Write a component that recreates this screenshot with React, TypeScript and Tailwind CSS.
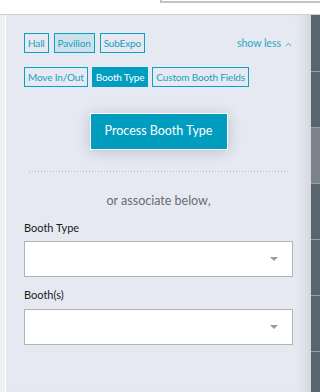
import { ChevronUp } from 'lucide-react';

export default function App() {
  const filters = ['Hall', 'Pavilion', 'SubExpo'];
  const tabs = ['Move In/Out', 'Booth Type', 'Custom Booth Fields'];
  const railRows = [0, 1, 2, 3, 4, 5, 6];

  return (
    <div className="w-[320px] h-[392px] bg-white flex flex-col overflow-hidden font-['Lato',sans-serif]">
      {/* strip above the panel */}
      <div className="h-[15px] flex justify-end border-b border-[#cfcfcf]">
        <div className="w-[160px] h-[3px] border-l-2 border-b-2 border-[#c4c4c4]" />
      </div>

      <div className="flex flex-1 min-h-0">
        <div className="w-[6px] bg-[#f1f1f1] border-r border-white" />

        <div className="flex-1 bg-[#e6e9f1] shadow-[inset_-14px_0_14px_-10px_rgba(0,0,0,0.10)] px-[18px] pt-[18px]">
          <div className="flex items-end justify-between">
            <div className="flex gap-[5px]">
              {filters.map((f) => (
                <span
                  key={f}
                  className={`h-[20px] px-[3px] flex items-center border border-[#0ba1c3] text-[10px] tracking-[-0.15px] text-[#1a9ec0] ${
                    f === 'Pavilion' ? 'bg-[#cde2ec]' : ''
                  }`}
                >
                  {f}
                </span>
              ))}
            </div>
            <button className="flex items-center gap-[3px] text-[10.5px] text-[#2aa3c6] mb-[1px]">
              show less
              <ChevronUp className="w-[9px] h-[9px]" strokeWidth={2.5} />
            </button>
          </div>

          <div className="flex gap-[4px] mt-[14px]">
            {tabs.map((t) => (
              <span
                key={t}
                className={`h-[20px] px-[3px] flex items-center border text-[10px] tracking-[-0.15px] ${
                  t === 'Booth Type'
                    ? 'bg-[#009ec1] border-[#009ec1] text-white'
                    : 'border-[#0ba1c3] text-[#1a9ec0]'
                }`}
              >
                {t}
              </span>
            ))}
          </div>

          <div className="flex justify-center mt-[26px]">
            <button className="w-[138px] h-[37px] bg-[#009dbf] border border-white text-white text-[12.5px] shadow-[0_2px_14px_rgba(40,50,80,0.22)]">
              Process Booth Type
            </button>
          </div>

          <div className="mx-[5px] mt-[21px] h-px bg-[linear-gradient(to_right,#b4b8c0_1px,transparent_1px)] bg-[length:3px_1px]" />

          <p className="mt-[20px] text-center text-[12.5px] text-[#686c73]">or associate below,</p>

          <label className="block mt-[9px] text-[11px] text-[#1b1b1b]">Booth Type</label>
          <div className="mt-[5px] h-[36px] bg-white border border-[#b3b3b7] flex items-center justify-end pr-[14px]">
            <span className="w-0 h-0 border-l-[4px] border-r-[4px] border-t-[4px] border-l-transparent border-r-transparent border-t-[#9a9a9a]" />
          </div>

          <label className="block mt-[10px] text-[11px] text-[#1b1b1b]">Booth(s)</label>
          <div className="mt-[5px] h-[36px] bg-white border border-[#b3b3b7] flex items-center justify-end pr-[14px]">
            <span className="w-0 h-0 border-l-[4px] border-r-[4px] border-t-[4px] border-l-transparent border-r-transparent border-t-[#9a9a9a]" />
          </div>
        </div>

        <div className="w-[9px] bg-[#59656e] flex flex-col">
          {railRows.map((r) => (
            <div
              key={r}
              className={`h-[56px] shrink-0 ${r > 0 ? 'border-t border-[#9aa0a6]' : ''} ${
                r === 2 ? 'bg-[#7b8289]' : ''
              }`}
            />
          ))}
        </div>
      </div>
    </div>
  );
}
